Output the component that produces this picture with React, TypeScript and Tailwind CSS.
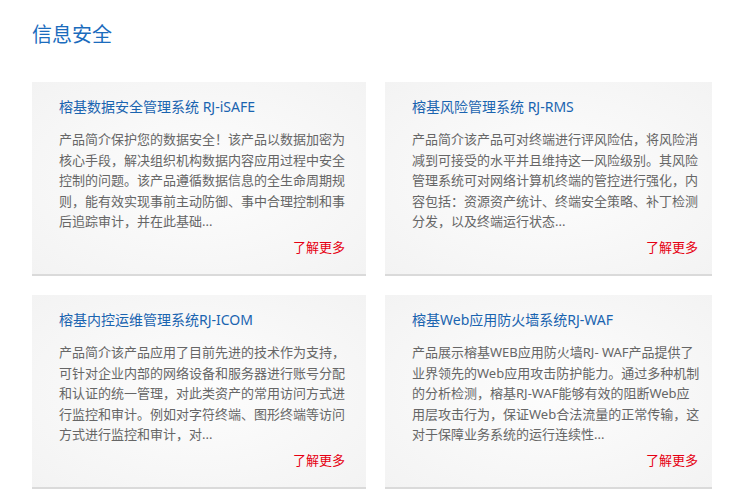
import React from "react";

type Product = {
  title: string;
  lines: string[];
  width: string;
  pad: string;
};

const products: Product[] = [
  {
    title: "榕基数据安全管理系统 RJ-iSAFE",
    lines: [
      "产品简介保护您的数据安全！该产品以数据加密为",
      "核心手段，解决组织机构数据内容应用过程中安全",
      "控制的问题。该产品遵循数据信息的全生命周期规",
      "则，能有效实现事前主动防御、事中合理控制和事",
      "后追踪审计，并在此基础...",
    ],
    width: "w-[334px]",
    pad: "pl-[27px] pr-[21px]",
  },
  {
    title: "榕基风险管理系统 RJ-RMS",
    lines: [
      "产品简介该产品可对终端进行评风险估，将风险消",
      "减到可接受的水平并且维持这一风险级别。其风险",
      "管理系统可对网络计算机终端的管控进行强化，内",
      "容包括：资源资产统计、终端安全策略、补丁检测",
      "分发，以及终端运行状态...",
    ],
    width: "w-[327px]",
    pad: "pl-[27px] pr-[14px]",
  },
  {
    title: "榕基内控运维管理系统RJ-ICOM",
    lines: [
      "产品简介该产品应用了目前先进的技术作为支持，",
      "可针对企业内部的网络设备和服务器进行账号分配",
      "和认证的统一管理，对此类资产的常用访问方式进",
      "行监控和审计。例如对字符终端、图形终端等访问",
      "方式进行监控和审计，对...",
    ],
    width: "w-[334px]",
    pad: "pl-[27px] pr-[21px]",
  },
  {
    title: "榕基Web应用防火墙系统RJ-WAF",
    lines: [
      "产品展示榕基WEB应用防火墙RJ- WAF产品提供了",
      "业界领先的Web应用攻击防护能力。通过多种机制",
      "的分析检测，榕基RJ-WAF能够有效的阻断Web应",
      "用层攻击行为，保证Web合法流量的正常传输，这",
      "对于保障业务系统的运行连续性...",
    ],
    width: "w-[327px]",
    pad: "pl-[27px] pr-[14px]",
  },
];

function ProductCard({ p }: { p: Product }) {
  return (
    <div
      className={`${p.width} ${p.pad} h-[194px] pt-[15px] border-b-2 border-[#dadada] bg-[radial-gradient(ellipse_at_center,#fdfdfd_0%,#f7f7f7_60%,#f3f3f3_100%)] flex flex-col`}
    >
      <a className="text-[14px] leading-[20px] text-[#1a64b0] whitespace-nowrap">{p.title}</a>
      <div className="mt-[12px] text-[13px] leading-[20.5px] text-[#666666]">
        {p.lines.map((l) => (
          <div key={l} className="whitespace-nowrap">
            {l}
          </div>
        ))}
      </div>
      <div className="mt-[5px] text-right text-[13px] leading-[20px] text-[#e60012]">了解更多</div>
    </div>
  );
}

export default function App() {
  return (
    <div
      className="w-[731px] h-[501px] bg-white overflow-hidden pl-[32px] pt-[21px]"
      style={{ fontFamily: '"Noto Sans", "Noto Sans CJK SC", sans-serif' }}
    >
      <h2 className="text-[20px] leading-[28px] text-[#1b6cbd]">信息安全</h2>
      <div className="mt-[33px] grid grid-cols-[334px_327px] gap-x-[19px] gap-y-[19px]">
        {products.map((p) => (
          <ProductCard key={p.title} p={p} />
        ))}
      </div>
    </div>
  );
}
